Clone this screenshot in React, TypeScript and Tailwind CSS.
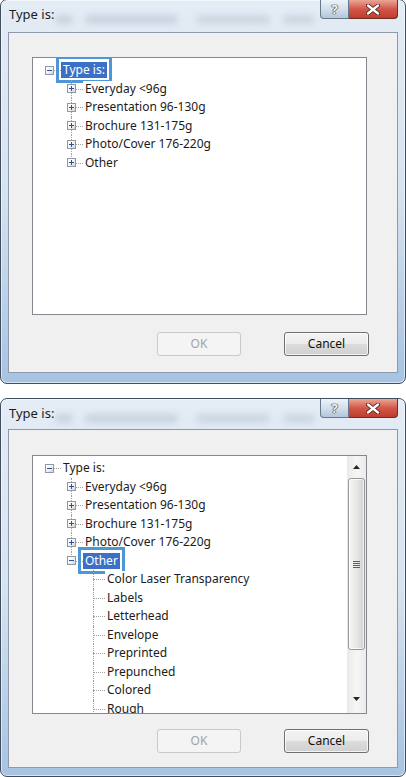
import React from 'react';

type Row = { level: number; label: string; box?: 'plus' | 'minus'; selected?: boolean; last?: boolean };

const topRows: Row[] = [
  { level: 0, label: 'Type is:', box: 'minus', selected: true, last: true },
  { level: 1, label: 'Everyday <96g', box: 'plus' },
  { level: 1, label: 'Presentation 96-130g', box: 'plus' },
  { level: 1, label: 'Brochure 131-175g', box: 'plus' },
  { level: 1, label: 'Photo/Cover 176-220g', box: 'plus' },
  { level: 1, label: 'Other', box: 'plus', last: true },
];

const bottomRows: Row[] = [
  { level: 0, label: 'Type is:', box: 'minus', last: true },
  { level: 1, label: 'Everyday <96g', box: 'plus' },
  { level: 1, label: 'Presentation 96-130g', box: 'plus' },
  { level: 1, label: 'Brochure 131-175g', box: 'plus' },
  { level: 1, label: 'Photo/Cover 176-220g', box: 'plus' },
  { level: 1, label: 'Other', box: 'minus', selected: true, last: true },
  { level: 2, label: 'Color Laser Transparency' },
  { level: 2, label: 'Labels' },
  { level: 2, label: 'Letterhead' },
  { level: 2, label: 'Envelope' },
  { level: 2, label: 'Preprinted' },
  { level: 2, label: 'Prepunched' },
  { level: 2, label: 'Colored' },
  { level: 2, label: 'Rough' },
];

function ExpandBox({ kind }: { kind: 'plus' | 'minus' }) {
  return (
    <div className="relative z-10 w-[9px] h-[9px] shrink-0 border border-[#8d9aa6] bg-gradient-to-br from-white via-[#f4f4f4] to-[#d3d3d3]">
      <div className="absolute left-[1px] w-[5px] top-[3px] h-[1px] bg-[#2c4f9e]" />
      {kind === 'plus' && <div className="absolute top-[1px] h-[5px] left-[3px] w-[1px] bg-[#2c4f9e]" />}
    </div>
  );
}

function TreeRow({ row }: { row: Row }) {
  const L = 12 + 22 * row.level;
  const cx = L + 4;
  return (
    <div className="relative h-[18.5px] flex items-center" style={{ paddingLeft: L }}>
      {row.level > 0 && (
        <div
          className={`absolute top-0 w-0 border-l border-dotted border-[#a0a0a0] ${row.last ? 'h-1/2' : 'h-full'}`}
          style={{ left: cx }}
        />
      )}
      <div className="absolute top-1/2 h-0 border-t border-dotted border-[#a0a0a0]" style={{ left: cx, width: 12 }} />
      {row.box ? <ExpandBox kind={row.box} /> : <div className="w-[9px] shrink-0" />}
      <span
        className={`relative ml-[7px] px-[2px] h-[16px] leading-[16px] whitespace-nowrap ${
          row.selected ? 'bg-[#3c70c6] text-white' : 'bg-white text-[#1b1b1b]'
        }`}
      >
        {row.label}
        {row.selected && (
          <span className="absolute -left-[5px] -right-[5px] -top-[6px] -bottom-[5px] border-[3px] border-[#4d97d9]" />
        )}
      </span>
    </div>
  );
}

function Arrow({ up }: { up: boolean }) {
  return (
    <svg width="7" height="4" viewBox="0 0 7 4">
      {up ? <path d="M0 4 L3.5 0 L7 4 Z" fill="#262626" /> : <path d="M0 0 L3.5 4 L7 0 Z" fill="#262626" />}
    </svg>
  );
}

function Scrollbar() {
  return (
    <div className="w-[19px] shrink-0 flex flex-col bg-gradient-to-r from-[#e9e9e9] via-[#f6f6f6] to-[#ebebeb]">
      <div className="h-[21px] flex items-center justify-center">
        <Arrow up />
      </div>
      <div className="mt-[1px] mx-[1px] h-[172px] rounded-[3px] border border-[#979797] bg-gradient-to-r from-[#f5f5f5] via-[#e8e8e8] to-[#d2d2d2] shadow-[inset_0_0_0_1px_rgba(255,255,255,0.7)] flex flex-col items-center justify-center gap-[1px]">
        <div className="w-[7px] h-[1px] bg-[#5f5f5f]" />
        <div className="w-[7px] h-[1px] bg-[#5f5f5f]" />
        <div className="w-[7px] h-[1px] bg-[#5f5f5f]" />
        <div className="w-[7px] h-[1px] bg-[#5f5f5f]" />
      </div>
      <div className="flex-1" />
      <div className="h-[21px] mb-[4px] flex items-center justify-center">
        <Arrow up={false} />
      </div>
    </div>
  );
}

function TitleButtons() {
  return (
    <div className="ml-auto mr-[7px] flex">
      <div className="w-[29px] h-[19px] rounded-bl-[4px] border border-t-0 border-[#66788c] bg-gradient-to-b from-[#eef3f9] via-[#d3dfeb] to-[#b4c6da] flex items-center justify-center text-[13px] font-bold leading-none text-[#f7f7f7] [text-shadow:0_0_1px_#1f2a36,0_0_1px_#1f2a36,0_0_1px_#1f2a36]">
        ?
      </div>
      <div className="w-[49px] h-[19px] rounded-br-[4px] border border-t-0 border-l-0 border-[#6e2b24] bg-gradient-to-b from-[#eaa596] via-[#d15749] to-[#c03c2c] flex items-center justify-center">
        <svg width="14" height="11" viewBox="0 0 14 11">
          <path d="M2 1.5 L12 9.5 M12 1.5 L2 9.5" stroke="#4a1a14" strokeWidth="4" strokeLinecap="round" />
          <path d="M2 1.5 L12 9.5 M12 1.5 L2 9.5" stroke="#ffffff" strokeWidth="2.4" strokeLinecap="round" />
        </svg>
      </div>
    </div>
  );
}

function Dialog({
  rows,
  scroll,
  className,
  titleClass,
  clientClass,
  treeClass,
  listClass,
  buttonsClass,
}: {
  rows: Row[];
  scroll: boolean;
  className: string;
  titleClass: string;
  clientClass: string;
  treeClass: string;
  listClass: string;
  buttonsClass: string;
}) {
  return (
    <div
      className={`shrink-0 w-[406px] rounded-[7px] border border-[#3f4d5e] bg-gradient-to-b from-[#e4ecf5] via-[#d6e3f0] to-[#a6c3e2] shadow-[inset_0_0_0_1px_rgba(255,255,255,0.55)] flex flex-col ${className}`}
    >
      <div className={`flex items-start ${titleClass}`}>
        <span className="pl-[8px] mt-[5px] text-[13px] leading-[18px] text-[#1c1c1c] whitespace-nowrap">Type is:</span>
        <div className="flex items-start mt-[15px]">
          <div className="ml-[1px] w-[18px] h-[9px] rounded-full bg-[#a3b1c1]/40 blur-[3px]" />
          <div className="ml-[12px] w-[93px] h-[9px] rounded-full bg-[#a3b1c1]/40 blur-[3px]" />
          <div className="ml-[18px] w-[74px] h-[9px] rounded-full bg-[#a3b1c1]/35 blur-[3px]" />
          <div className="ml-[13px] w-[32px] h-[9px] rounded-full bg-[#a3b1c1]/35 blur-[3px]" />
        </div>
        <TitleButtons />
      </div>
      <div className={`mx-[7px] border border-[#8e9aab] bg-[#f0f0f0] flex flex-col ${clientClass}`}>
        <div className={`ml-[23px] w-[335px] border border-[#84898f] bg-white flex overflow-hidden ${treeClass}`}>
          <div className={`flex-1 overflow-hidden ${listClass}`}>
            {rows.map((r, i) => (
              <TreeRow key={i} row={r} />
            ))}
          </div>
          {scroll && <Scrollbar />}
        </div>
        <div className={`flex justify-end gap-[43px] pr-[28px] ${buttonsClass}`}>
          <div className="w-[84px] h-[24px] rounded-[3px] border border-[#c9c9c9] bg-[#f4f4f4] text-[#a2a2a2] flex items-center justify-center text-[12px]">
            OK
          </div>
          <div className="w-[85px] h-[24px] rounded-[3px] border border-[#707070] bg-[linear-gradient(#f4f4f4_0%,#ebebeb_50%,#dcdcdc_50%,#d0d0d0_100%)] shadow-[inset_0_0_0_1px_rgba(255,255,255,0.75)] text-[#111111] flex items-center justify-center text-[12px]">
            Cancel
          </div>
        </div>
      </div>
    </div>
  );
}

export default function App() {
  return (
    <div className="w-[406px] h-[777px] bg-white overflow-hidden flex flex-col font-['Noto_Sans',sans-serif] text-[12px]">
      <Dialog
        rows={topRows}
        scroll={false}
        className="-mt-px h-[385px]"
        titleClass="h-[32px]"
        clientClass="h-[341px] pt-[24px]"
        treeClass="h-[258px]"
        listClass="pt-[3px]"
        buttonsClass="mt-[17px]"
      />
      <Dialog
        rows={bottomRows}
        scroll={true}
        className="mt-[14px] h-[379px]"
        titleClass="h-[30px]"
        clientClass="h-[339px] pt-[25px]"
        treeClass="h-[259px]"
        listClass="pt-[3px]"
        buttonsClass="mt-[15px]"
      />
    </div>
  );
}
